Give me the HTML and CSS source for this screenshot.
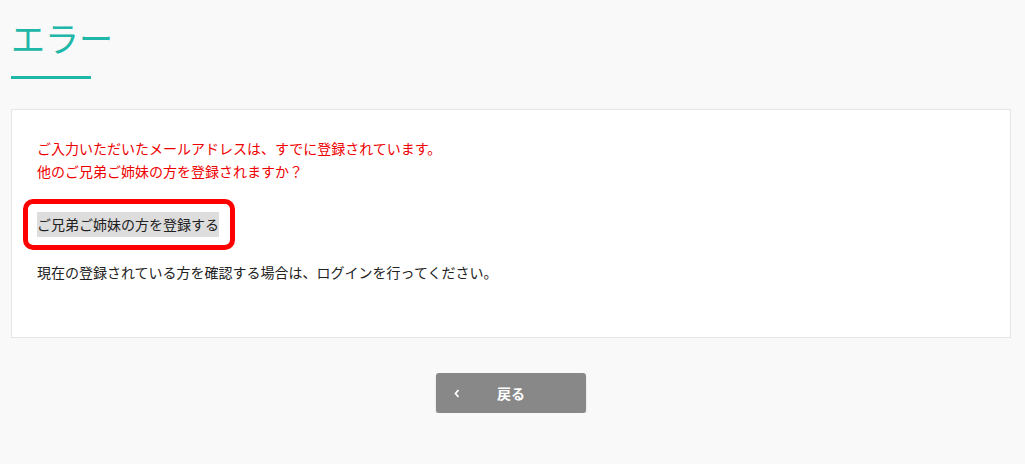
FILE: index.html
```html
<!DOCTYPE html>
<html lang="ja">
<head>
  <meta charset="UTF-8" />
  <meta name="viewport" content="width=device-width, initial-scale=1.0" />
  <title>エラー</title>
  <link rel="stylesheet" href="styles.css">
</head>
<body>
  <h1 class="page-title">エラー</h1>

  <div class="panel">
    <p class="error-msg">ご入力いただいたメールアドレスは、すでに登録されています。<br>他のご兄弟ご姉妹の方を登録されますか？</p>

    <div class="mark-box">
      <button type="button" class="sibling-btn">ご兄弟ご姉妹の方を登録する</button>
    </div>

    <p class="note">現在の登録されている方を確認する場合は、ログインを行ってください。</p>
  </div>

  <div class="actions">
    <button type="button" class="back-btn">
      <span class="chev">
        <svg width="6" height="9" viewBox="0 0 6 9"><path d="M4.5 1 L1.5 4.5 L4.5 8" fill="none" stroke="#fff" stroke-width="1.8"/></svg>
      </span>
      <span>戻る</span>
      <span></span>
    </button>
  </div>
</body>
</html>
```

FILE: styles.css
```css
body {
  margin: 0;
  padding: 0 14px 0 11px;
  background-color: #f9f9f9;
  font-family: "Noto Sans CJK JP", "Noto Sans", sans-serif;
  color: #222;
}
.page-title {
  margin: 0;
  padding-top: 14px;
  font-size: 34px;
  font-weight: normal;
  line-height: 48px;
  color: #20b6a8;
}
.page-title::after {
  content: "";
  display: block;
  width: 80px;
  height: 3px;
  margin-top: 14px;
  background: #20b6a8;
}
.panel {
  margin-top: 30px;
  background: #fff;
  border: 1px solid #e6e6e6;
  padding: 27px 25px 53px;
}
.error-msg {
  margin: 0;
  font-size: 14px;
  line-height: 23px;
  color: #ee0000;
}
.mark-box {
  display: inline-block;
  margin: 16px 0 0 -14px;
  padding: 8px 11px 8px 9px;
  border: 5px solid #ff0000;
  border-radius: 10px;
}
.sibling-btn {
  display: block;
  margin: 0;
  padding: 0;
  border: none;
  background: #dddddd;
  font-family: inherit;
  font-size: 14px;
  line-height: 25px;
  color: #222;
  cursor: pointer;
}
.note {
  margin: 11px 0 0;
  font-size: 14px;
  line-height: 23px;
}
.actions {
  display: flex;
  justify-content: center;
  margin-top: 35px;
}
.back-btn {
  display: grid;
  grid-template-columns: 1fr auto 1fr;
  align-items: center;
  width: 150px;
  height: 40px;
  padding: 0;
  border: none;
  border-radius: 3px;
  background: #888888;
  box-shadow: 0 2px 2px rgba(0,0,0,0.15);
  font-family: inherit;
  font-size: 14px;
  font-weight: bold;
  color: #fff;
  cursor: pointer;
}
.chev {
  justify-self: start;
  display: flex;
  padding-left: 18px;
}
```
